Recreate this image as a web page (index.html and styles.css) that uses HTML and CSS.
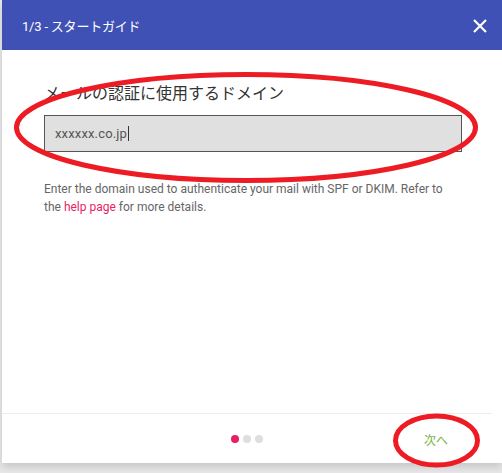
FILE: index.html
```html
<!DOCTYPE html>
<html lang="ja">
<head>
  <meta charset="UTF-8" />
  <meta name="viewport" content="width=device-width, initial-scale=1.0" />
  <title>スタートガイド</title>
  <link rel="stylesheet" href="styles.css">
</head>
<body>
  <div class="dialog">
    <!-- Title bar -->
    <div class="dialog-header">
      <span class="dialog-title">1/3 - スタートガイド</span>
      <button class="close-btn" aria-label="close">
        <svg width="14" height="14" viewBox="0 0 14 14">
          <path d="M1 1 L13 13 M13 1 L1 13" stroke="#fff" stroke-width="2.2" fill="none" />
        </svg>
      </button>
    </div>

    <!-- Step content -->
    <div class="dialog-body">
      <label class="field-label" for="domain">メールの認証に使用するドメイン</label>
      <div class="field-input">
        <span class="field-value">xxxxxx.co.jp</span><span class="caret"></span>
      </div>
      <p class="hint">
        Enter the domain used to authenticate your mail with SPF or DKIM. Refer to
        the <a href="#" class="hint-link">help page</a> for more details.
      </p>
    </div>

    <!-- Step dots + next -->
    <div class="dialog-footer">
      <div class="steps">
        <span class="dot active"></span>
        <span class="dot"></span>
        <span class="dot"></span>
      </div>
      <button class="next-btn">次へ</button>
    </div>
  </div>

  <!-- hand-drawn marks on top -->
  <svg class="marks" width="502" height="473" viewBox="0 0 502 473">
    <ellipse cx="246" cy="127.5" rx="229.5" ry="53" fill="none" stroke="#ed1c24" stroke-width="5" />
    <ellipse cx="436.5" cy="440.5" rx="41" ry="24.5" fill="none" stroke="#ed1c24" stroke-width="5" />
  </svg>
</body>
</html>
```

FILE: styles.css
```css
/* Page backdrop */
body {
  margin: 0;
  background: #e8e8e8;
  font-family: 'Roboto', 'Noto Sans CJK JP', sans-serif;
  width: 502px;
  height: 473px;
  overflow: hidden;
  position: relative;
}

/* Dialog card */
.dialog {
  margin-left: 2px;
  width: 500px;
  height: 463px;
  background: #fff;
  display: flex;
  flex-direction: column;
  box-shadow: 0 4px 8px rgba(0, 0, 0, 0.15);
}

.dialog-header {
  height: 50px;
  background: #3f51b5;
  display: flex;
  align-items: center;
  justify-content: space-between;
  padding: 0 15px 0 20px;
  box-sizing: border-box;
  flex-shrink: 0;
}

.dialog-title {
  color: #fff;
  font-size: 13px;
  letter-spacing: -0.2px;
}

.close-btn {
  background: none;
  border: none;
  padding: 0;
  width: 14px;
  height: 14px;
  margin-top: 2px;
  display: flex;
}

/* Body */
.dialog-body {
  flex: 1;
  padding: 33px 0 0 42px;
}

.field-label {
  display: block;
  font-size: 16px;
  color: #333;
  line-height: 22px;
  margin-bottom: 10px;
}

.field-input {
  width: 418px;
  height: 37px;
  box-sizing: border-box;
  background: #e0e0e0;
  border: 1px solid #555;
  display: flex;
  align-items: center;
  padding-left: 10px;
}

.field-value {
  font-size: 13px;
  color: #555;
  letter-spacing: 0.15px;
}

.caret {
  width: 1px;
  height: 15px;
  background: #333;
  margin-left: 1px;
}

.hint {
  width: 408px;
  margin: 28px 0 0;
  font-size: 12px;
  line-height: 18px;
  color: #666;
}

.hint-link {
  color: #e91e63;
  text-decoration: none;
}

/* Footer */
.dialog-footer {
  height: 50px;
  margin-right: 10px;
  border-top: 1px solid #ececec;
  box-sizing: border-box;
  display: flex;
  align-items: center;
  justify-content: center;
  position: relative;
  flex-shrink: 0;
}

.steps {
  display: flex;
  gap: 4px;
}

.dot {
  width: 8px;
  height: 8px;
  border-radius: 50%;
  background: #dedede;
}

.dot.active {
  background: #e91e63;
}

.next-btn {
  position: absolute;
  right: 44px;
  top: 50%;
  transform: translateY(-50%);
  background: none;
  border: none;
  padding: 0;
  font-family: 'Roboto', 'Noto Sans CJK JP', sans-serif;
  font-size: 12px;
  color: #7cb342;
}

.marks {
  position: absolute;
  left: 0;
  top: 0;
  pointer-events: none;
}
```
